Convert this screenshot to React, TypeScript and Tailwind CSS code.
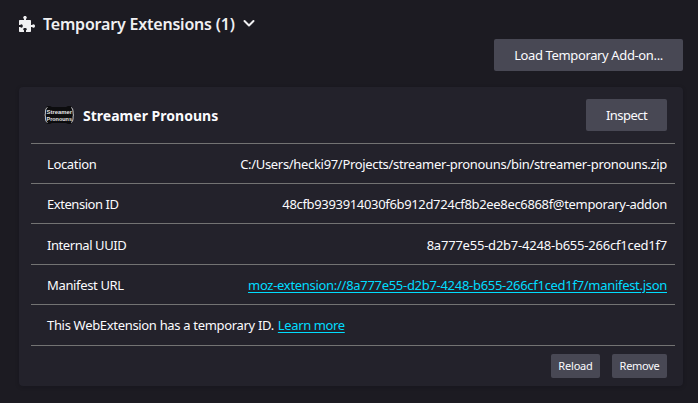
import { ReactNode } from "react";

const rows: { label: string; value: string; height: string; tracking: string; labelTracking: string; link?: boolean }[] = [
  { label: "Location", value: "C:/Users/hecki97/Projects/streamer-pronouns/bin/streamer-pronouns.zip", height: "h-10 pt-0.5", tracking: "tracking-[-0.32px]", labelTracking: "tracking-[-0.35px]" },
  { label: "Extension ID", value: "48cfb9393914030f6b912d724cf8b2ee8ec6868f@temporary-addon", height: "h-10 pt-0.5", tracking: "tracking-[-0.335px]", labelTracking: "tracking-[-0.45px]" },
  { label: "Internal UUID", value: "8a777e55-d2b7-4248-b655-266cf1ced1f7", height: "h-[41px] pt-[3px]", tracking: "tracking-[-0.22px]", labelTracking: "tracking-[-0.42px]" },
  { label: "Manifest URL", value: "moz-extension://8a777e55-d2b7-4248-b655-266cf1ced1f7/manifest.json", height: "h-10 pt-0.5", tracking: "tracking-[-0.295px]", labelTracking: "tracking-[-0.35px]", link: true },
];

function Button({ className, children }: { className: string; children: ReactNode }) {
  return (
    <button className={`flex items-center justify-center whitespace-nowrap rounded-[2px] bg-[#484854] text-[#fbfbfe] ${className}`}>
      {children}
    </button>
  );
}

function Puzzle() {
  return (
    <svg className="h-4 w-4 shrink-0" viewBox="0 0 16 16" fill="#f0f0f2">
      <path d="M1 4h4V2.900C4.400 2.600 4.200 2.100 4.200 1.600 4.200.7 5 0 6 0s1.800.7 1.800 1.600c0 .5-.2 1-.8 1.300V4h4c.6 0 1 .4 1 1v4h1.100c.3-.6.7-.8 1.300-.8.9 0 1.600.8 1.600 1.800s-.7 1.800-1.600 1.800c-.6 0-1-.2-1.300-.8H12v4c0 .6-.4 1-1 1H7v-1.700c.5-.2.800-.6.800-1.100 0-.7-.8-1.200-1.800-1.200s-1.800.5-1.800 1.200c0 .5.300.9.800 1.100V16H1c-.6 0-1-.4-1-1v-4h1.300c.2.400.6.7 1.100.7.800 0 1.400-.8 1.400-1.700S3.200 8.300 2.400 8.300c-.5 0-.9.300-1.100.7H0V5c0-.6.400-1 1-1Z" />
    </svg>
  );
}

function ExtensionLogo() {
  return (
    <svg className="h-8 w-8 shrink-0" viewBox="0 0 32 32">
      <path d="M4 7h3l2 1h14l2-1h3l2 4v10l-2 4h-3l-2-1H9l-2 1H4l-2-4V11Z" fill="#0c0c0e" />
      <path d="M4.500 8.500Q2.500 9 2.500 12q0 4-.5 4 .5 0 .5 4 0 3 2 3.500M28 8.500q2 .5 2 3.500 0 4 .5 4-.5 0-.5 4 0 3-2 3.500" fill="none" stroke="#c4c4c6" strokeWidth="1" />
      <g fontFamily="Liberation Sans, sans-serif" fontWeight="700" fontSize="5.500" fill="#e4e4e6">
        <text x="3.500" y="14.500" textLength="25.500" lengthAdjust="spacingAndGlyphs">Streamer</text>
        <text x="3.500" y="22.200" textLength="25.500" lengthAdjust="spacingAndGlyphs">Pronouns</text>
      </g>
    </svg>
  );
}

export default function App() {
  return (
    <main className="flex h-[403px] w-[698px] flex-col bg-[#1c1b22] pl-[19px] pr-[15px] font-['Noto_Sans','Open_Sans',sans-serif] text-[13px] text-[#fbfbfe]">
      <header className="flex h-[39px] items-center pt-[9px]">
        <Puzzle />
        <h1 className="ml-2 whitespace-nowrap text-[16px] font-semibold tracking-[-0.2px] text-[#f0f0f2]">Temporary Extensions (1)</h1>
        <svg className="ml-2 h-3 w-3" viewBox="0 0 12 12" fill="none" stroke="#f0f0f2" strokeWidth="2" strokeLinecap="round" strokeLinejoin="round">
          <path d="m1.500 3 4.500 4.500 4.500-4.500" />
        </svg>
      </header>
      <div className="flex justify-end">
        <Button className="h-8 w-[189px] pt-0.5 tracking-[-0.37px]">Load Temporary Add-on...</Button>
      </div>
      <section className="mt-4 h-[299px] rounded bg-[#23222b] shadow-[0_1px_4px_rgba(12,12,13,0.2)]">
        <div className="mr-4 flex h-14 items-center pl-6">
          <ExtensionLogo />
          <h2 className="ml-2 flex-1 whitespace-nowrap text-[14px] font-bold tracking-[0.02px]">Streamer Pronouns</h2>
          <Button className="h-8 w-[81px] pt-0.5 tracking-[-0.55px]">Inspect</Button>
        </div>
        <dl className="ml-3 mr-2 border-b border-[#737373]">
          {rows.map((row) => (
            <div key={row.label} className={`flex items-center justify-between whitespace-nowrap border-t border-[#737373] pl-4 pr-2 ${row.height}`}>
              <dt className={row.labelTracking}>{row.label}</dt>
              <dd className={row.tracking}>
                {row.link ? <a className="text-[#00ddff] underline underline-offset-2">{row.value}</a> : row.value}
              </dd>
            </div>
          ))}
          <div className="flex h-[41px] items-center gap-1 whitespace-nowrap border-t border-[#737373] pl-4 pt-0.5">
            <span className="tracking-[-0.32px]">This WebExtension has a temporary ID.</span>
            <a className="tracking-[-0.38px] text-[#00ddff] underline underline-offset-2">Learn more</a>
          </div>
        </dl>
        <div className="mr-4 mt-2 flex justify-end gap-3">
          <Button className="h-6 w-[49px] text-[11px] tracking-[-0.2px]">Reload</Button>
          <Button className="h-6 w-[55px] text-[11px] tracking-[-0.3px]">Remove</Button>
        </div>
      </section>
    </main>
  );
}
